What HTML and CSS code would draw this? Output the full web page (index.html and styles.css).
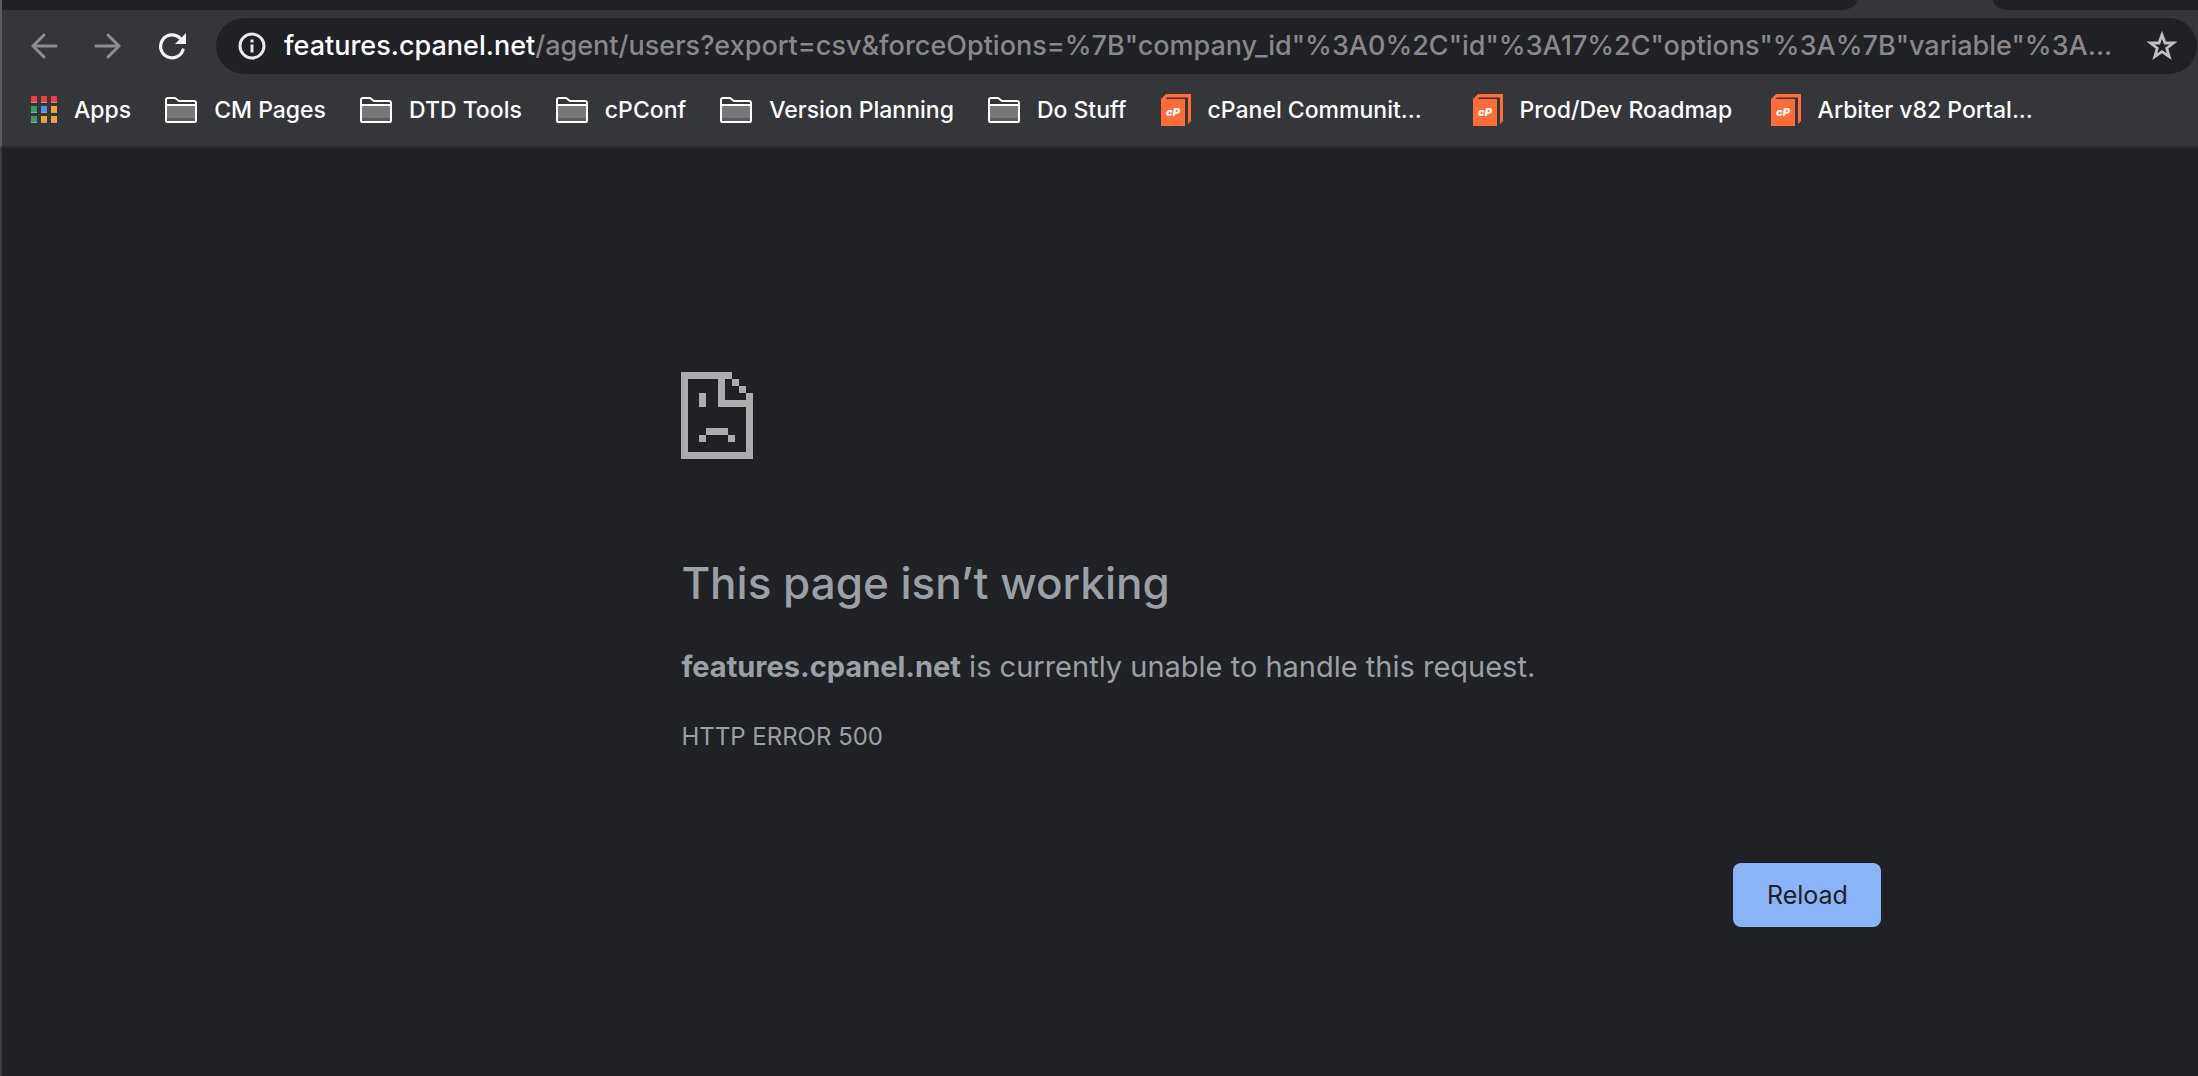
FILE: index.html
```html
<!DOCTYPE html>
<html lang="en">
<head>
<meta charset="utf-8">
<title>features.cpanel.net</title>
<link rel="stylesheet" href="styles.css">
</head>
<body>
<svg class="sprite" aria-hidden="true">
  <symbol id="folder" viewBox="0 0 32 26">
    <path d="M2 8h28v16H2z" fill="#78787b"/>
    <path d="M2 21h28v3H2z" fill="#5f5f62"/>
    <path d="M1 24V3q0-2 2-2h7l4 3h15q2 0 2 2v18q0 1-1 1H2q-1 0-1-1zM1 8h30" fill="none" stroke="#fff" stroke-width="2"/>
  </symbol>
  <symbol id="cpanel" viewBox="0 0 30 32">
    <path d="M0 5 5 0h25v27l-3 3V3.500H6L4.500 5H24v27H0z" fill="#ff6c37"/>
    <text x="12" y="22" text-anchor="middle" class="logo-text">cP</text>
  </symbol>
</svg>
<header class="browser">
  <div class="tabstrip">
    <div class="tabs-before"></div>
    <div class="tab-active"></div>
    <div class="tabs-after"></div>
  </div>
  <div class="toolbar">
    <button class="nav" type="button" aria-label="Back">
      <svg width="28" height="28" viewBox="0 0 28 28" fill="none" stroke="#8e8e90" stroke-width="3" stroke-linecap="round"><path d="M26 14H3M14 3 3 14l11 11"/></svg>
    </button>
    <button class="nav" type="button" aria-label="Forward">
      <svg width="28" height="28" viewBox="0 0 28 28" fill="none" stroke="#8e8e90" stroke-width="3" stroke-linecap="round"><path d="M2 14h23M14 3l11 11-11 11"/></svg>
    </button>
    <button class="nav" type="button" aria-label="Reload this page">
      <svg width="28" height="28" viewBox="0 0 28 28"><path d="M25 18A11.500 11.500 0 1 1 22 6" fill="none" stroke="#f1f3f4" stroke-width="3.200" stroke-linecap="round"/><path d="M28 1v11H17z" fill="#f1f3f4"/></svg>
    </button>
    <div class="omnibox">
      <svg width="28" height="28" viewBox="0 0 28 28"><circle cx="14" cy="14" r="12" fill="none" stroke="#e8eaed" stroke-width="3"/><path d="M12.500 7.500h3v3h-3zM12.500 12.500h3v8h-3z" fill="#e8eaed"/></svg>
      <div class="url" role="textbox" contenteditable="true" spellcheck="false" aria-label="Address"><span class="host">features.cpanel.net</span>/agent/users?export=csv&amp;forceOptions=%7B"company_id"%3A0%2C"id"%3A17%2C"options"%3A%7B"variable"%3A...</div>
      <button class="star" type="button" aria-label="Bookmark this page">
        <svg width="30" height="30" viewBox="0 0 30 30"><path d="M15 3.800 18 12h8.500l-6.800 5.200 2.500 8.500L15 20.700l-7.200 5 2.500-8.500L3.500 12H12z" fill="none" stroke="#c0c0c2" stroke-width="2.800"/></svg>
      </button>
    </div>
  </div>
  <nav class="bookmarks">
    <a class="bookmark" href="#">
      <svg width="26" height="28" viewBox="0 0 26 28">
        <path d="M0 6h6v1H0zm10 0h6v1h-6zm10 0h6v1h-6zM0 16h6v1H0zm10 0h6v1h-6zm10 0h6v1h-6zM0 26h6v1H0zm10 0h6v1h-6zm10 0h6v1h-6z" fill="#a0a0a2"/>
        <path d="M0 0h6v6H0zm10 0h6v6h-6zm10 0h6v6h-6z" fill="#f93a37"/>
        <path d="M0 10h6v6H0zm0 10h6v6H0z" fill="#3a9c5b"/>
        <path d="M10 10h6v6h-6z" fill="#4990f5"/>
        <path d="M20 10h6v6h-6zM10 20h6v6h-6zm10 0h6v6h-6z" fill="#f2a427"/>
      </svg>Apps</a>
    <a class="bookmark" href="#"><svg width="32" height="26"><use href="#folder"/></svg>CM Pages</a>
    <a class="bookmark" href="#"><svg width="32" height="26"><use href="#folder"/></svg>DTD Tools</a>
    <a class="bookmark" href="#"><svg width="32" height="26"><use href="#folder"/></svg>cPConf</a>
    <a class="bookmark" href="#"><svg width="32" height="26"><use href="#folder"/></svg>Version Planning</a>
    <a class="bookmark" href="#"><svg width="32" height="26"><use href="#folder"/></svg>Do Stuff</a>
    <a class="bookmark elided" href="#"><svg width="30" height="32"><use href="#cpanel"/></svg>cPanel Communit...</a>
    <a class="bookmark site" href="#"><svg width="30" height="32"><use href="#cpanel"/></svg>Prod/Dev Roadmap</a>
    <a class="bookmark site" href="#"><svg width="30" height="32"><use href="#cpanel"/></svg>Arbiter v82 Portal...</a>
  </nav>
</header>
<main class="page">
  <div class="error">
    <svg class="sad" width="72" height="87" viewBox="0 0 72 87" shape-rendering="crispEdges" aria-hidden="true">
      <path fill="#acacac" d="M0 0h51v7H7v73h58V35H37V7h7v21h21v-7h7v66H0zM51 7h7v7h-7zM58 14h7v7h-7zM18 21h7v14h-7zM25 56h22v7H25zM18 63h7v7h-7zM47 63h7v7h-7z"/>
    </svg>
    <h1>This page isn’t working</h1>
    <p class="summary"><strong>features.cpanel.net</strong> is currently unable to handle this request.</p>
    <p class="code">HTTP ERROR 500</p>
    <div class="actions"><button class="reload" type="button">Reload</button></div>
  </div>
</main>
</body>
</html>
```
FILE: styles.css
```css
* { box-sizing: border-box; }

body {
  margin: 0;
  min-height: 100vh;
  display: flex;
  flex-direction: column;
  background: #202124;
  font-family: Inter, "Liberation Sans", sans-serif;
}

.sprite { display: none; }
.logo-text { font: italic 900 11px Inter, "Liberation Sans", sans-serif; fill: #fff; }

button {
  border: 0;
  padding: 0;
  background: none;
  font-family: inherit;
}

svg { display: block; flex: none; }

/* Browser chrome */
.browser {
  background: #35363a;
  border-left: 2px solid #5c5d60;
  border-bottom: 2px solid #2a2b2b;
}

.tabstrip { display: flex; height: 10px; }
.tabs-before,
.tabs-after { background: #202124; }
.tabs-before { flex: 1; border-bottom-right-radius: 16px 10px; }
.tab-active { width: 136px; }
.tabs-after { width: 205px; border-bottom-left-radius: 16px 10px; }

.toolbar {
  display: flex;
  align-items: center;
  padding: 8px 1px 0 10px;
}

.nav {
  width: 64px;
  height: 56px;
  display: flex;
  align-items: center;
  justify-content: center;
}

.omnibox {
  flex: 1;
  min-width: 0;
  display: flex;
  align-items: center;
  gap: 18px;
  margin-left: 12px;
  padding: 0 20px 0 22px;
  border-radius: 28px;
  background: #202124;
}

.url {
  flex: 1;
  min-width: 0;
  overflow: hidden;
  white-space: nowrap;
  font-size: 27px;
  font-weight: 500;
  line-height: 56px;
  color: #88888a;
}

.host { color: #fff; }

.bookmarks {
  display: flex;
  align-items: center;
  gap: 34px;
  height: 72px;
  padding-left: 29px;
  overflow: hidden;
}

.bookmark {
  flex: none;
  display: flex;
  align-items: center;
  gap: 17px;
  font-size: 23px;
  font-weight: 500;
  line-height: 32px;
  color: #fff;
  text-decoration: none;
  white-space: nowrap;
}

.elided { width: 278px; }
.site { min-width: 264px; }

/* Error page */
.page {
  flex: 1;
  padding: 224px 32px 64px 31%;
  border-left: 2px solid #3c3d40;
  color: #9aa0a6;
}

.error { max-width: 1200px; margin-left: -2px; }

h1 {
  margin: 96px 0 36px;
  font-size: 44px;
  font-weight: 500;
  line-height: 56px;
}

.summary {
  margin: 0 0 32px;
  font-size: 29px;
  line-height: 40px;
}

.code {
  margin: 0 0 108px;
  font-size: 24px;
  line-height: 36px;
}

.actions { display: flex; justify-content: flex-end; }

.reload {
  min-width: 148px;
  padding: 0 32px;
  border-radius: 8px;
  background: #8ab4f8;
  color: #202124;
  font-size: 25px;
  line-height: 64px;
}
```
